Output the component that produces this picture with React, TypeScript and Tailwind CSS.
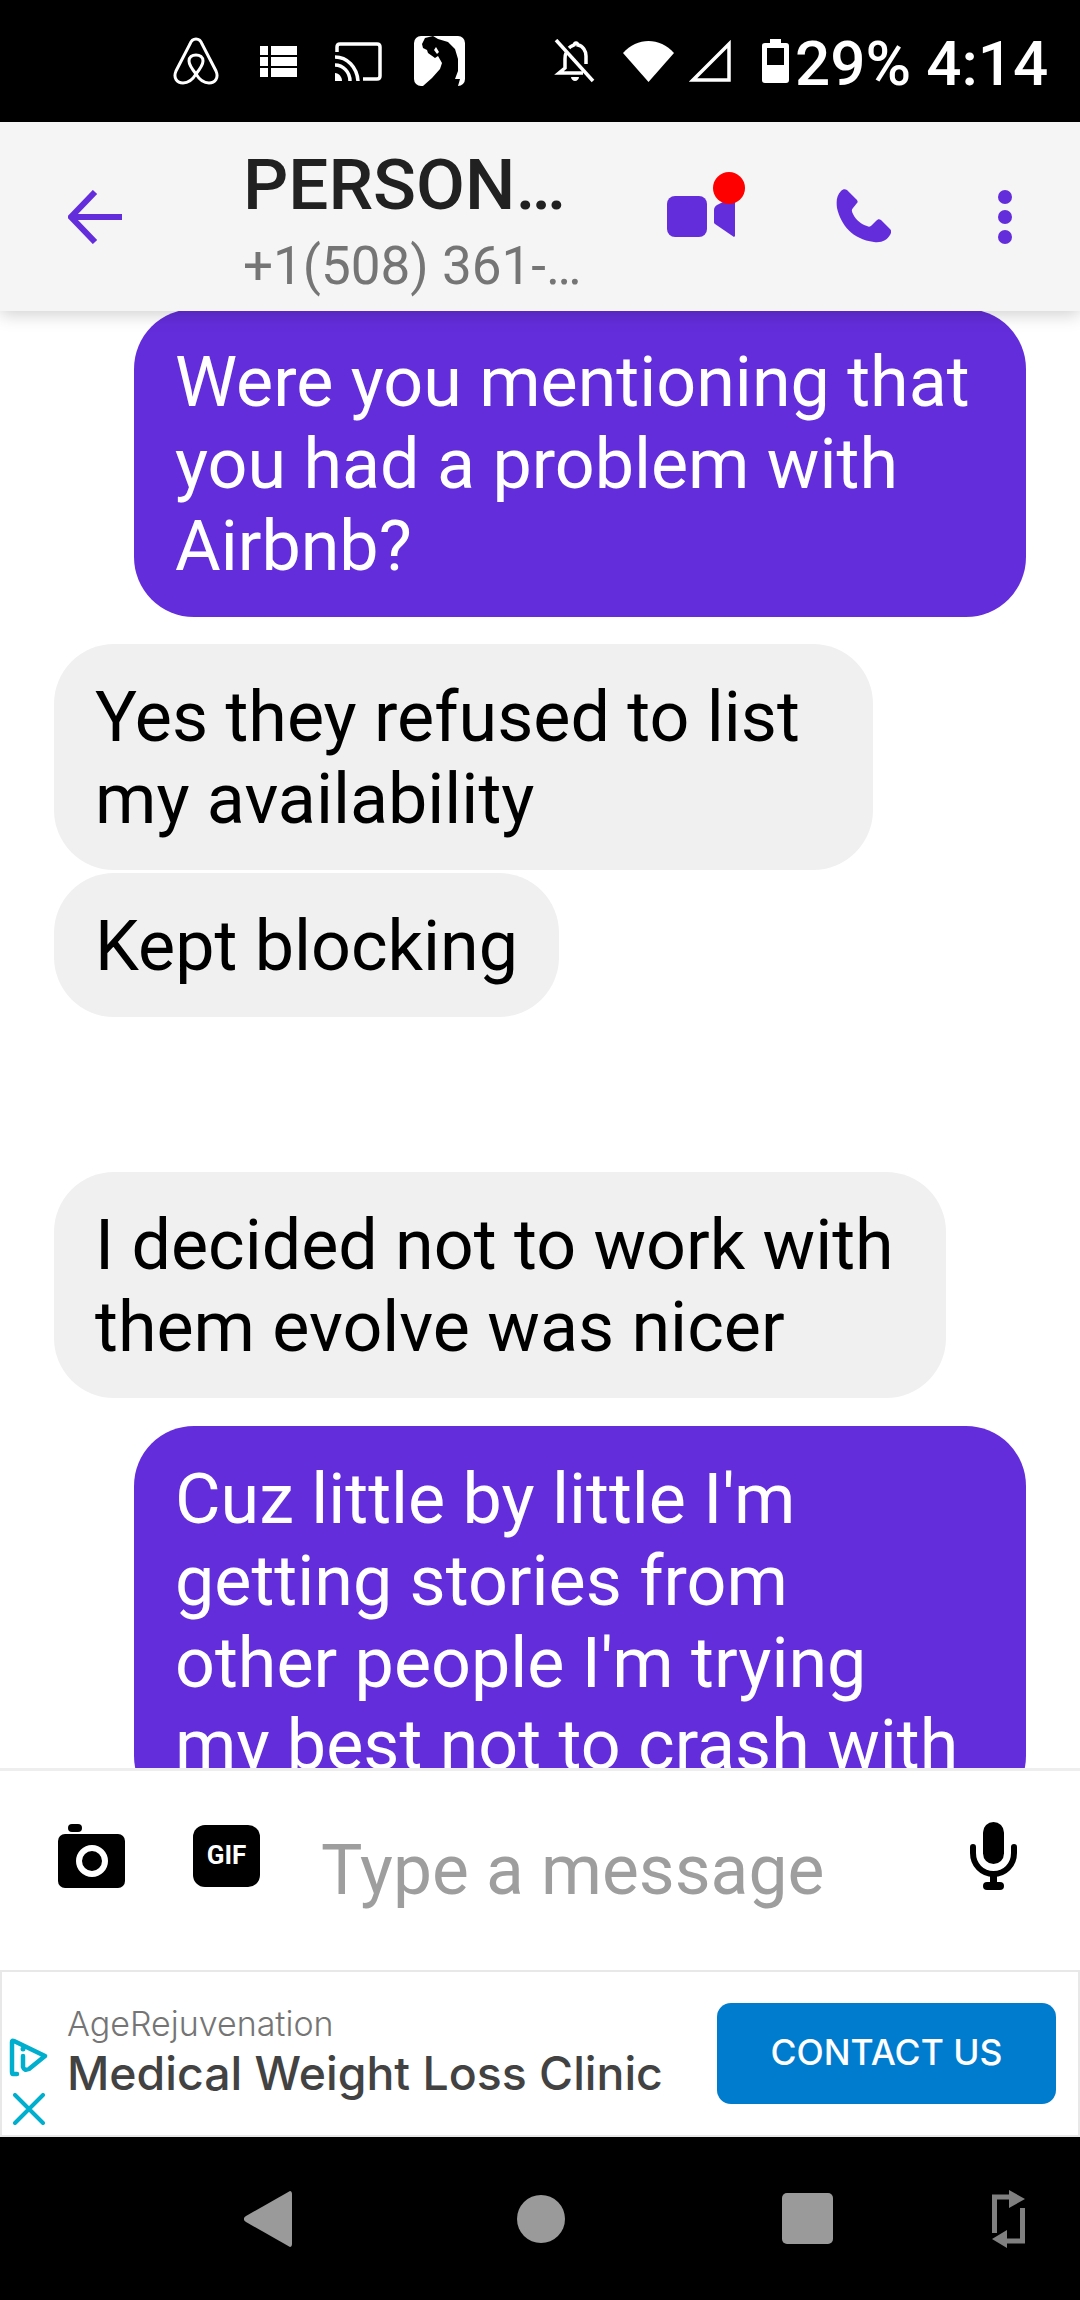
const purple = "#642ddb"

const Bubble = ({ mine, width, children, className = "" }: { mine?: boolean; width: string; children: string[]; className?: string }) => (
  <div
    className={`shrink-0 rounded-[60px] pt-[32px] pb-[30px] pl-[41px] text-[70px] leading-[82px] whitespace-nowrap ${width} ${
      mine ? "ml-[134px] bg-[#642ddb] text-white" : "ml-[54px] bg-[#f0f0f0] text-black"
    } ${className}`}
  >
    {children.map((line) => (
      <div key={line}>{line}</div>
    ))}
  </div>
)

const StatusBar = () => (
  <div className="flex h-[122px] shrink-0 items-center bg-black pl-[173px] text-white">
    <svg className="h-[48px] w-[46px]" viewBox="0 0 46 48" fill="none" stroke="white" strokeWidth="3">
      <path d="M23 2c-3 0-5 2-6 5L3 34c-3 7 1 12 7 12 5 0 10-4 13-9 3 5 8 9 13 9 6 0 10-5 7-12L29 7c-1-3-3-5-6-5Z" />
      <path d="M23 37c-4-5-7-9-7-13 0-4 3-6 7-6s7 2 7 6c0 4-3 8-7 13Z" />
    </svg>
    <svg className="ml-[41px] h-[31px] w-[37px]" viewBox="0 0 37 31" fill="white">
      <path d="M0 0h8v9H0zM11 0h26v9H11zM0 11h8v9H0zM11 11h26v9H11zM0 22h8v9H0zM11 22h26v9H11z" />
    </svg>
    <svg className="ml-[38px] h-[39px] w-[47px]" viewBox="0 0 47 39" fill="none" stroke="white" strokeWidth="3.5">
      <path d="M2 10V5c0-2 1-3 3-3h37c2 0 3 1 3 3v29c0 2-1 3-3 3H28" />
      <path d="M0 15c12 0 22 10 23 24M0 23c8 0 15 7 15 16" />
      <path d="M0 31c4 0 7 4 7 8H0z" fill="white" stroke="none" />
    </svg>
    <svg className="ml-[32px] h-[50px] w-[51px]" viewBox="0 0 51 50">
      <rect width="51" height="50" rx="7" fill="white" />
      <path d="M8 8L11 2 19 0 24 3 34 6 41 13 44 23 44 35 41 43 46 43 44 50 9 50 18 42 26 33 28 27 24 20 21 22 14 17 13 14 9 12Z" fill="black" />
      <path d="M22 11l3 5-2 2-3-4z" fill="white" />
    </svg>
    <svg className="ml-[88px] h-[44px] w-[42px]" viewBox="0 0 42 44" fill="none" stroke="white" strokeWidth="3.500">
      <path d="M3 1l37 41" />
      <path d="M13 14c-1 2-1 3-1 6v9l-6 5h24M16 9c2-2 3-2 5-3 0-1 1-2 2-2s2 1 2 2c5 1 8 6 8 11v8" />
      <path d="M18 38h8c0 2-2 4-4 4s-4-2-4-4z" fill="white" stroke="none" />
    </svg>
    <svg className="ml-[28px] h-[41px] w-[51px]" viewBox="0 0 51 41" fill="white">
      <path d="M0 12C14-4 37-4 51 12L25.500 41Z" />
    </svg>
    <svg className="ml-[15px] h-[42px] w-[42px]" viewBox="0 0 42 42" fill="none" stroke="white" strokeWidth="3.500">
      <path d="M40 4v36H4Z" />
    </svg>
    <svg className="ml-[31px] h-[44px] w-[27px]" viewBox="0 0 27 44" fill="white">
      <path fillRule="evenodd" d="M8 0h11v4h5c2 0 3 1 3 3v34c0 2-1 3-3 3H3c-2 0-3-1-3-3V7c0-2 1-3 3-3h5zM5 9v17h17V9z" />
    </svg>
    <span className="mt-[5px] ml-[6px] text-[62px] leading-none font-medium whitespace-nowrap">29%</span>
    <span className="mt-[5px] ml-[15px] text-[62px] leading-none font-medium whitespace-nowrap">4:14</span>
  </div>
)

const Header = () => (
  <div className="relative z-10 flex h-[189px] shrink-0 items-center bg-[#f5f5f5] pl-[68px] shadow-[0_4px_16px_rgba(0,0,0,0.18)]">
    <svg className="h-[54px] w-[54px]" viewBox="0 0 54 54" fill="none" stroke={purple} strokeWidth="6">
      <path d="M27 2L3 27l24 25M3 27h51" />
    </svg>
    <div className="ml-[121px] w-[424px]">
      <div className="mt-[9px] text-[71px] leading-[82px] font-medium text-[#212121]">PERSON…</div>
      <div className="mt-[7px] text-[53px] leading-[66px] text-[#757575]">+1(508) 361-…</div>
    </div>
    <div className="relative h-[41px] w-[68px]">
      <svg className="h-[41px] w-[68px]" viewBox="0 0 68 41" fill={purple}>
        <rect x="0" y="0" width="40" height="41" rx="8" />
        <path d="M47 14c0-2 1-4 3-5l18-9v40l-1 1-19-13c-1-1-1-1-1-2z" />
      </svg>
      <div className="absolute top-[-24px] left-[46px] h-[32px] w-[32px] rounded-full bg-[#ff0000]" />
    </div>
    <svg className="ml-[101px] h-[55px] w-[55px]" viewBox="0 0 55 55" fill={purple}>
      <path d="M5 2c2-2 4-2 6-1l9 9c2 2 2 3 1 4l-4 5c-2 2-1 4 0 6 3 6 8 10 14 12 2 1 3 1 5-1l4-4c2-2 3-2 5-1l9 9c2 2 1 4 0 6-3 5-8 8-16 7C16 50 5 36 1 19 0 11 1 6 5 2z" />
    </svg>
    <svg className="ml-[107px] h-[54px] w-[14px]" viewBox="0 0 14 54" fill={purple}>
      <circle cx="7" cy="7" r="7" />
      <circle cx="7" cy="27" r="7" />
      <circle cx="7" cy="47" r="7" />
    </svg>
  </div>
)

const InputBar = () => (
  <div className="flex h-[202px] shrink-0 items-center border-t-[3px] border-[#eeeeee] bg-white pl-[58px]">
    <svg className="mt-[-30px] h-[64px] w-[67px]" viewBox="0 0 67 64">
      <rect x="10" y="0" width="14" height="8" rx="4" fill="black" />
      <rect x="0" y="10" width="67" height="54" rx="7" fill="black" />
      <circle cx="34" cy="37" r="13" fill="none" stroke="white" strokeWidth="6" />
    </svg>
    <div className="mt-[-30px] ml-[68px] flex h-[62px] w-[67px] items-center justify-center rounded-[12px] bg-black text-[26px] font-bold text-white">
      GIF
    </div>
    <span className="ml-[61px] w-[649px] text-[69.5px] leading-[82px] text-[#9e9e9e]">Type a message</span>
    <svg className="mt-[-30px] h-[68px] w-[47px]" viewBox="0 0 47 68" fill="black">
      <rect x="13" y="0" width="21" height="42" rx="10.500" />
      <path d="M3 25v6c0 12 9 21 20.500 21S44 43 44 31v-6" fill="none" stroke="black" strokeWidth="6" strokeLinecap="round" />
      <rect x="20" y="50" width="7" height="12" />
      <rect x="13" y="60" width="21" height="8" rx="4" />
    </svg>
  </div>
)

const AdBar = () => (
  <div className="flex h-[167px] shrink-0 items-center border-2 border-[#e8e8e8] bg-white">
    <div className="ml-[7px] flex w-[58px] flex-col self-end pb-[10px]">
      <svg className="h-[40px] w-[39px]" viewBox="0 0 39 40" fill="none" stroke="#00aecd" strokeWidth="4.500" strokeLinecap="round" strokeLinejoin="round">
        <path d="M8 36H4Q3 36 3 34V4Q3 2 5 3L36 18 20 31Q15 33 14 29V18" />
        <circle cx="14" cy="11" r="2.500" fill="#00aecd" stroke="none" />
      </svg>
      <svg className="mt-[15px] ml-[4px] h-[32px] w-[32px]" viewBox="0 0 32 32" fill="none" stroke="#00aecd" strokeWidth="4" strokeLinecap="round">
        <path d="M2 2l28 28M30 2L2 30" />
      </svg>
    </div>
    <div className="mt-[-3px] w-[650px] font-['Inter',sans-serif]">
      <div className="text-[34px] leading-[40px] font-light text-[#757575]">AgeRejuvenation</div>
      <div className="mt-[2px] text-[46.400px] leading-[54px] font-medium whitespace-nowrap text-[#424242]">Medical Weight Loss Clinic</div>
    </div>
    <div className="flex h-[101px] w-[339px] items-center justify-center rounded-[14px] bg-[#007ccf] pb-[2px] font-['Inter',sans-serif] text-[35.500px] font-medium text-white">
      CONTACT US
    </div>
  </div>
)

const NavBar = () => (
  <div className="flex h-[163px] shrink-0 items-center bg-black pl-[244px]">
    <svg className="h-[56px] w-[48px]" viewBox="0 0 48 56" fill="#9a9a9a">
      <path d="M46 0c1 0 2 1 2 3v50c0 2-1 3-2 3L2 31c-3-2-3-4 0-6z" />
    </svg>
    <div className="ml-[225px] h-[48px] w-[48px] rounded-full bg-[#9a9a9a]" />
    <div className="ml-[217px] h-[51px] w-[51px] rounded-[5px] bg-[#9a9a9a]" />
    <svg className="ml-[159px] h-[58px] w-[34px]" viewBox="0 0 34 58" fill="none" stroke="#808080" strokeWidth="5">
      <path d="M2.500 43V7H18M30.500 18v33H15" />
      <path d="M17 0l16 9-16 9zM15 40L0 49l15 9z" fill="#808080" stroke="none" />
    </svg>
  </div>
)

export default function App() {
  return (
    <div className="flex h-[2300px] w-[1080px] flex-col overflow-hidden bg-white font-['Roboto',sans-serif]">
      <StatusBar />
      <Header />
      <div className="flex min-h-0 flex-1 flex-col overflow-hidden">
        <Bubble mine width="w-[892px]" className="mt-[-2px]">{["Were you mentioning that", "you had a problem with", "Airbnb?"]}</Bubble>
        <Bubble width="w-[819px]" className="mt-[27px]">{["Yes they refused to list", "my availability"]}</Bubble>
        <Bubble width="w-[505px]" className="mt-[3px]">{["Kept blocking"]}</Bubble>
        <Bubble width="w-[892px]" className="mt-[155px]">{["I decided not to work with", "them evolve was nicer"]}</Bubble>
        <Bubble mine width="w-[892px]" className="mt-[28px]">{["Cuz little by little I'm", "getting stories from", "other people I'm trying", "my best not to crash with"]}</Bubble>
      </div>
      <InputBar />
      <AdBar />
      <NavBar />
    </div>
  )
}
